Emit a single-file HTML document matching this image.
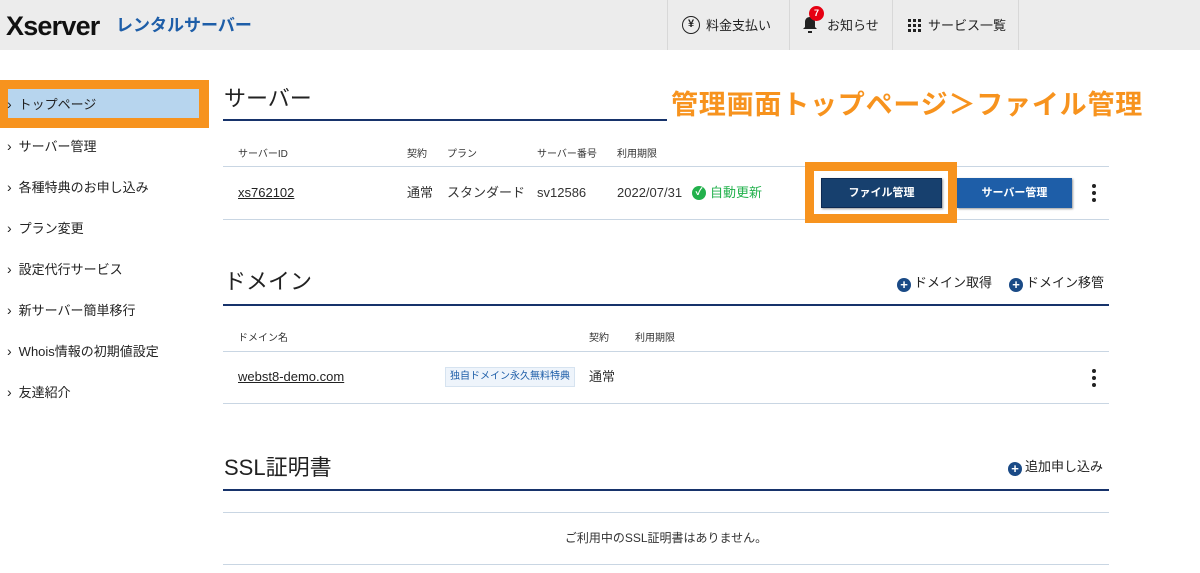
<!DOCTYPE html>
<html><head><meta charset="utf-8"><style>
*{margin:0;padding:0;box-sizing:border-box}
body{width:1200px;height:573px;overflow:hidden;background:#fff;font-family:"Liberation Sans","Noto Sans CJK JP",sans-serif;color:#222;position:relative}
.a{position:absolute;white-space:nowrap}
.hdr{left:0;top:0;width:1200px;height:50px;background:#ececec}
.sep{top:0;width:1px;height:50px;background:#d8d8d8}
.nav{font-size:13px;color:#222;top:17px;line-height:18px}
.side{font-size:13px;left:7px;color:#222;line-height:18px}
.side:before{content:"›";margin-right:7px;font-size:14px}
.h2{font-size:22px;color:#222;line-height:28px}
.ln{height:1px;background:#c9d6e3}
.dk{height:2px;background:#17336b}
.th{font-size:10px;color:#333;line-height:14px}
.td{font-size:13px;color:#333;line-height:16px}
.plus{display:inline-block;width:14px;height:14px;border-radius:50%;background:#1a4a86;color:#fff;font-size:13px;line-height:14px;text-align:center;font-weight:bold;vertical-align:-2px;margin-right:3px}
.lk{font-size:13px;color:#222;line-height:18px}
.dots i{display:block;width:4px;height:4px;border-radius:50%;background:#222;margin-bottom:3px}
</style></head><body>
<div class="a hdr"></div>
<div class="a" style="left:6px;top:11px;font-size:27px;line-height:30px;font-weight:bold;color:#111;letter-spacing:-0.8px">Xserver</div>
<div class="a" style="left:116px;top:16px;font-size:17px;line-height:20px;font-weight:bold;color:#1e5ea8">レンタルサーバー</div>
<div class="a sep" style="left:667px"></div>
<div class="a sep" style="left:789px"></div>
<div class="a sep" style="left:892px"></div>
<div class="a sep" style="left:1018px"></div>
<div class="a" style="left:682px;top:16px;width:18px;height:18px;border:1.5px solid #222;border-radius:50%;font-size:11px;text-align:center;line-height:15px;font-weight:bold">¥</div>
<div class="a nav" style="left:706px">料金支払い</div>
<svg class="a" style="left:802px;top:15px" width="16" height="20" viewBox="0 0 16 20"><path d="M8 2c-3 0-5 2-5 5v5l-2 2h14l-2-2V7c0-3-2-5-5-5z" fill="#222"/><rect x="6" y="16" width="4" height="2" fill="#222"/></svg>
<div class="a" style="left:809px;top:6px;width:15px;height:15px;border-radius:50%;background:#e60012;color:#fff;font-size:9px;font-weight:bold;text-align:center;line-height:15px">7</div>
<div class="a nav" style="left:827px">お知らせ</div>
<svg class="a" style="left:908px;top:19px" width="14" height="14"><g fill="#222"><rect x="0" y="0" width="3" height="3"/><rect x="5" y="0" width="3" height="3"/><rect x="10" y="0" width="3" height="3"/><rect x="0" y="5" width="3" height="3"/><rect x="5" y="5" width="3" height="3"/><rect x="10" y="5" width="3" height="3"/><rect x="0" y="10" width="3" height="3"/><rect x="5" y="10" width="3" height="3"/><rect x="10" y="10" width="3" height="3"/></g></svg>
<div class="a nav" style="left:928px">サービス一覧</div>

<div class="a" style="left:0;top:80px;width:209px;height:48px;background:#f7931e"></div>
<div class="a" style="left:8px;top:89px;width:191px;height:29px;background:#b7d5ee"></div>
<div class="a side" style="top:95px">トップページ</div>
<div class="a side" style="top:137px">サーバー管理</div>
<div class="a side" style="top:178px">各種特典のお申し込み</div>
<div class="a side" style="top:219px">プラン変更</div>
<div class="a side" style="top:260px">設定代行サービス</div>
<div class="a side" style="top:301px">新サーバー簡単移行</div>
<div class="a side" style="top:342px">Whois情報の初期値設定</div>
<div class="a side" style="top:383px">友達紹介</div>

<div class="a h2" style="left:224px;top:85px">サーバー</div>
<div class="a dk" style="left:223px;top:119px;width:444px"></div>
<div class="a" style="left:671px;top:88px;font-size:27px;line-height:34px;font-weight:bold;color:#f7931e;letter-spacing:0.8px">管理画面トップページ＞ファイル管理</div>
<div class="a th" style="left:238px;top:148px">サーバーID</div>
<div class="a th" style="left:407px;top:148px">契約</div>
<div class="a th" style="left:447px;top:148px">プラン</div>
<div class="a th" style="left:537px;top:148px">サーバー番号</div>
<div class="a th" style="left:617px;top:148px">利用期限</div>
<div class="a ln" style="left:223px;top:166px;width:886px"></div>
<div class="a td" style="left:238px;top:185px;text-decoration:underline;color:#222">xs762102</div>
<div class="a td" style="left:407px;top:185px">通常</div>
<div class="a td" style="left:447px;top:185px">スタンダード</div>
<div class="a td" style="left:537px;top:185px">sv12586</div>
<div class="a td" style="left:617px;top:185px">2022/07/31</div>
<div class="a" style="left:692px;top:186px;width:14px;height:14px;border-radius:50%;background:#22b14c;color:#fff;font-size:10px;text-align:center;line-height:14px;font-weight:bold">✓</div>
<div class="a td" style="left:710px;top:185px;color:#22b14c">自動更新</div>
<div class="a ln" style="left:223px;top:219px;width:886px"></div>
<div class="a" style="left:805px;top:162px;width:152px;height:61px;border:9px solid #f7931e;background:#fff"></div>
<div class="a" style="left:821px;top:178px;width:121px;height:30px;background:#17406e;border:1px solid #0e2a52;color:#fff;font-size:11px;font-weight:bold;text-align:center;line-height:28px;box-shadow:1px 1px 2px #999">ファイル管理</div>
<div class="a" style="left:957px;top:178px;width:115px;height:30px;background:#1e5ea8;color:#fff;font-size:11px;font-weight:bold;text-align:center;line-height:30px;box-shadow:1px 1px 2px #999">サーバー管理</div>
<div class="a dots" style="left:1092px;top:184px"><i></i><i></i><i></i></div>

<div class="a h2" style="left:224px;top:268px">ドメイン</div>
<div class="a lk" style="left:897px;top:274px"><span class="plus">+</span>ドメイン取得</div>
<div class="a lk" style="left:1009px;top:274px"><span class="plus">+</span>ドメイン移管</div>
<div class="a dk" style="left:223px;top:304px;width:886px"></div>
<div class="a th" style="left:238px;top:332px">ドメイン名</div>
<div class="a th" style="left:589px;top:332px">契約</div>
<div class="a th" style="left:635px;top:332px">利用期限</div>
<div class="a ln" style="left:223px;top:351px;width:886px"></div>
<div class="a td" style="left:238px;top:369px;text-decoration:underline;color:#222">webst8-demo.com</div>
<div class="a" style="left:445px;top:367px;width:130px;height:20px;background:#eef4fb;border:1px solid #d6e3f0;color:#1e5ea8;font-size:10px;text-align:center;line-height:18px">独自ドメイン永久無料特典</div>
<div class="a td" style="left:589px;top:369px">通常</div>
<div class="a dots" style="left:1092px;top:369px"><i></i><i></i><i></i></div>
<div class="a ln" style="left:223px;top:403px;width:886px"></div>

<div class="a h2" style="left:224px;top:454px">SSL証明書</div>
<div class="a lk" style="left:1008px;top:458px"><span class="plus">+</span>追加申し込み</div>
<div class="a dk" style="left:223px;top:489px;width:886px"></div>
<div class="a ln" style="left:223px;top:512px;width:886px"></div>
<div class="a" style="left:223px;top:530px;width:886px;text-align:center;font-size:12px;line-height:16px;color:#333">ご利用中のSSL証明書はありません。</div>
<div class="a ln" style="left:223px;top:564px;width:886px"></div>
</body></html>
